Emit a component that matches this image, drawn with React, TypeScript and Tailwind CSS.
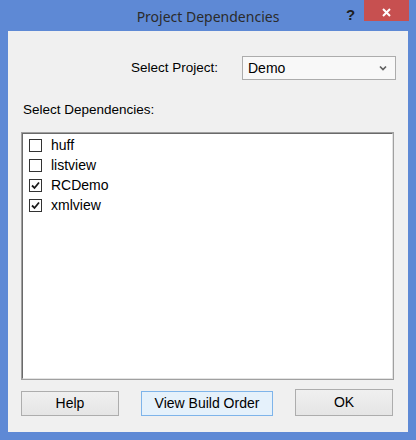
import React from "react";

const deps = [
  { name: "huff", checked: false },
  { name: "listview", checked: false },
  { name: "RCDemo", checked: true },
  { name: "xmlview", checked: true },
];

const CheckBox = ({ checked }: { checked: boolean }) => (
  <span className="flex justify-center items-center bg-white border border-[#333333] w-[13px] h-[13px]">
    {checked && (
      <svg width="9" height="9" viewBox="0 0 9 9">
        <path d="M1 4.5 L3.5 7 L8 1.5" fill="none" stroke="#1a1a1a" strokeWidth="1.8" />
      </svg>
    )}
  </span>
);

export default function App() {
  return (
    <div
      className="flex flex-col bg-[#5e89d5] w-[416px] h-[440px] text-[13.5px] text-black"
      style={{ fontFamily: '"Liberation Sans", Arial, sans-serif' }}
    >
      {/* Title bar */}
      <div className="relative flex justify-center items-center h-[31px]">
        <span
          className="pt-[1px] text-[#2b2b2b] text-[14px]"
          style={{ fontFamily: '"Noto Sans", "Open Sans", sans-serif' }}
        >
          Project Dependencies
        </span>
        <span className="top-[4px] left-[346px] absolute font-bold text-[#1e1e1e] text-[15px]">?</span>
        <div className="top-0 left-[364px] absolute flex justify-center items-center bg-[#c75050] pt-[3px] w-[45px] h-[21px]">
          <svg width="9" height="9" viewBox="0 0 9 9">
            <path d="M1 1 L8 8 M8 1 L1 8" stroke="#ffffff" strokeWidth="2" />
          </svg>
        </div>
      </div>

      {/* Client area */}
      <div className="flex flex-col flex-1 bg-[#f0f0f0] mx-[8px] mb-[8px] pr-[15px] pb-[16px] pl-[13px]">
        <div className="flex justify-end items-center gap-[24px] mt-[25px] mr-[-3px]">
          <span>Select Project:</span>
          <div className="flex justify-between items-center bg-[#f8f8f8] px-[5px] border border-[#acacac] w-[154px] h-[24px]">
            <span className="text-[14px]">Demo</span>
            <svg width="8" height="6" viewBox="0 0 8 6" className="mr-[3px]">
              <path d="M1 1.5 L4 4.5 L7 1.5" fill="none" stroke="#606060" strokeWidth="1.7" />
            </svg>
          </div>
        </div>

        <div className="mt-[22px] ml-[2px] h-[16px] leading-[16px]">Select Dependencies:</div>

        <div className="bg-white mt-[14px] mr-[-1px] border border-[#a0a0a0] h-[248px]">
          <div className="border-[#6a6a6a] border-t border-r-[#e3e3e3] border-b-[#e3e3e3] border-l h-full border-r border-b pt-[1px]">
            {deps.map((d) => (
              <div key={d.name} className="flex items-center gap-[9px] pl-[6px] h-[20px]">
                <CheckBox checked={d.checked} />
                <span className="text-[14px]">{d.name}</span>
              </div>
            ))}
          </div>
        </div>

        <div className="flex items-end gap-[22px] mt-auto">
          <button className="bg-gradient-to-b from-[#f0f0f0] to-[#e5e5e5] border border-[#adadad] w-[98px] h-[25px] text-[14px]">
            Help
          </button>
          <button className="bg-[#e5f1fb] border border-[#7eb4ea] w-[132px] h-[25px] text-[14px]">
            View Build Order
          </button>
          <button className="bg-gradient-to-b from-[#f0f0f0] to-[#e5e5e5] border border-[#adadad] w-[98px] h-[27px] text-[14px]">
            OK
          </button>
        </div>
      </div>
    </div>
  );
}
